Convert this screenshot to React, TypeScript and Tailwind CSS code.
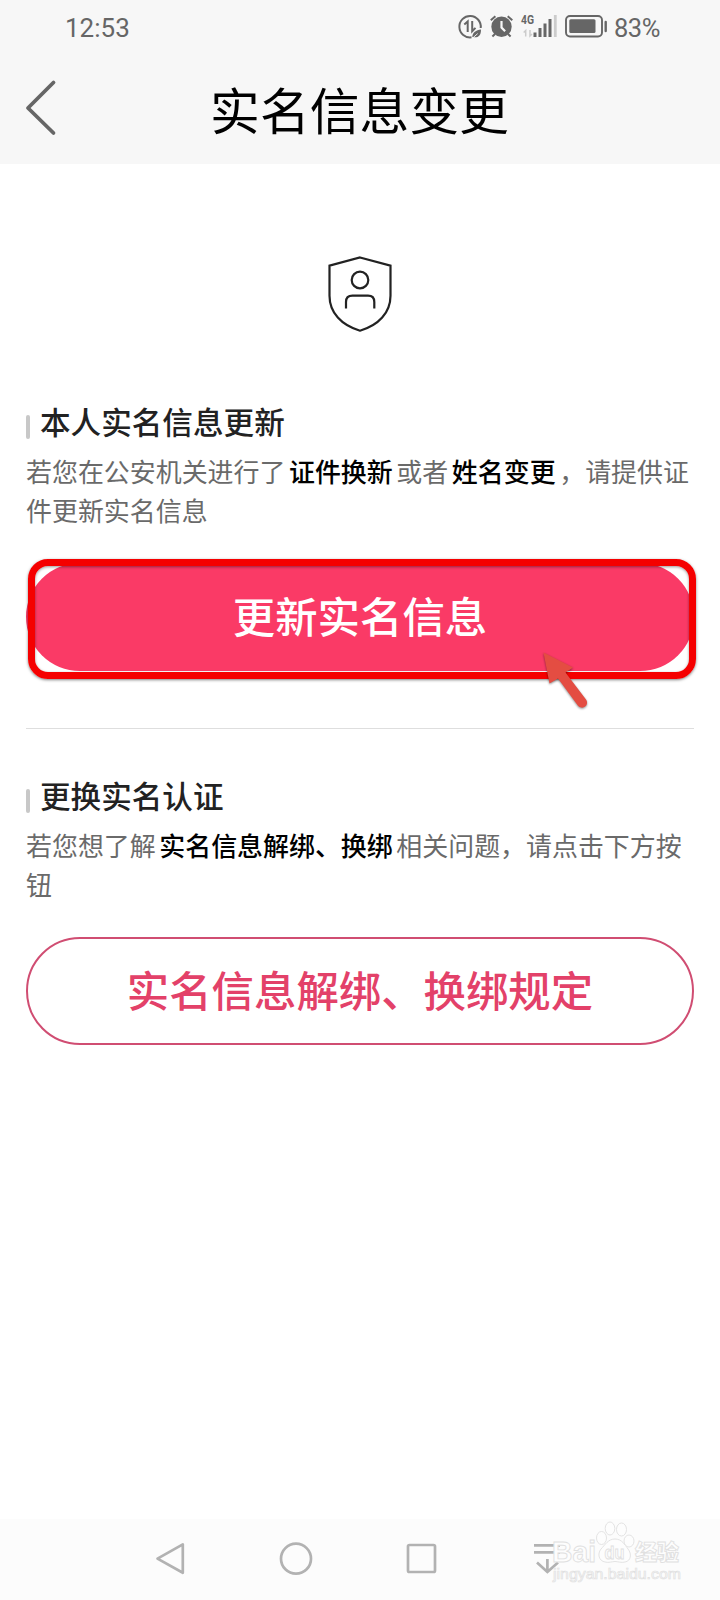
import type { ReactNode } from "react";

const StatusBar = () => {
  return (
    <div className="flex h-[54px] items-center justify-between pl-[65px] pr-[60px] font-[Roboto,sans-serif] text-[26px] leading-[54px] text-[#666]">
      <span className="pt-[2px]">12:53</span>
      <div className="flex items-center">
        <svg className="h-[54px] w-[157px]" viewBox="456 0 157 54" fill="none" stroke="#666">
          {/* data saver */}
          <path d="M471.5 37.3A10.7 10.7 0 1 1 480.7 28" strokeWidth="2" />
          <path d="M464.3 24.5l3.4-3v10.6M472.2 21v10.3l3.3-3.4" strokeWidth="2" />
          <path d="M481 29.5c0 6-2.5 8-6.3 7.8l-2.4-.2c.2-4.6 3.7-6.9 8.7-7.6z" fill="#666" stroke="none" />
          <path d="M472.5 38.2l5.2-4.6" stroke="#f7f7f7" strokeWidth="0.9" />
          {/* alarm */}
          <circle cx="501.5" cy="26.8" r="10.2" fill="#666" stroke="none" />
          <path d="M490.8 20.2l4.6-4M512.3 20.2l-4.6-4M495 34l-2.6 2.5M508 34l2.6 2.5" strokeWidth="2" />
          <path d="M501.5 21v6.5l3.6 3.8" stroke="#f7f7f7" strokeWidth="2.2" />
          {/* signal */}
          <path d="M523.7 32.5l2-2v6M530 30v6l2-2" stroke="#ccc" strokeWidth="1.5" />
          <path d="M535 32.5v4.5M540 28v9M545 23.5v13.5M550 19v18" strokeWidth="3" />
          <path d="M555.3 15v22" stroke="#ccc" strokeWidth="2.8" />
          <text x="521" y="24.3" textLength="13" lengthAdjust="spacingAndGlyphs" fontSize="13" fontWeight="700" fill="#666" stroke="none">4G</text>
          {/* battery */}
          <rect x="566" y="16" width="36" height="20.5" rx="4" strokeWidth="1.9" />
          <rect x="569.3" y="19.3" width="26.2" height="13.7" rx="1.5" fill="#666" stroke="none" />
          <path d="M605.7 22v9" strokeWidth="2.4" strokeLinecap="round" />
        </svg>
        <span className="w-[47px] pt-[2px] pl-px text-[25.5px] tracking-[-0.5px]">83%</span>
      </div>
    </div>
  );
};

const Section = ({ title, children }: { title: string; children: ReactNode }) => {
  return (
    <section>
      <div className="flex h-[44px] items-center gap-[10px]">
        <span className="mt-[12px] h-6 w-1 rounded-sm bg-[#c8c8c8]" />
        <h2 className="text-[30.6px] leading-[44px] font-medium text-[#222]">{title}</h2>
      </div>
      <p className="mt-[8px] -mr-4 text-[25.95px] leading-[39px] text-[#6a6a6a]">{children}</p>
    </section>
  );
};

const Strong = ({ children }: { children: ReactNode }) => (
  <span className="mx-[3.6px] font-medium text-black">{children}</span>
);

const Watermark = () => {
  return (
    <svg className="absolute top-0 left-[540px] h-[81px] w-[180px]" viewBox="540 1519 180 81" fill="#fdfdfd" stroke="#e0e0e0" strokeWidth="0.9">
      <g fontFamily="Liberation Sans, sans-serif" fontWeight="700">
        <text x="552" y="1561.5" fontSize="29" textLength="44" lengthAdjust="spacingAndGlyphs">Bai</text>
        <path d="M615 1539c7 0 10 6 13 10 4 5 3 12-3 13-4 1-7-.5-10-.5s-6 1.5-10 .5c-6-1-8-8-4-13 4-4 7-10 14-10z" />
        <ellipse cx="601.5" cy="1538" rx="5" ry="6.5" />
        <ellipse cx="610" cy="1528.5" rx="4.8" ry="6.5" />
        <ellipse cx="621.5" cy="1529.5" rx="5" ry="6.5" />
        <ellipse cx="629" cy="1541" rx="5" ry="6" />
        <text x="604.5" y="1559" fontSize="19" textLength="20" lengthAdjust="spacingAndGlyphs">du</text>
      </g>
      <text x="635" y="1560" fontSize="22" fontWeight="900" textLength="44" lengthAdjust="spacingAndGlyphs" fontFamily="Noto Sans CJK SC, sans-serif">经验</text>
      <text x="553" y="1579" fontSize="15.5" strokeWidth="0.7" textLength="128" lengthAdjust="spacingAndGlyphs" fontFamily="Liberation Sans, sans-serif">jingyan.baidu.com</text>
    </svg>
  );
};

const NavBar = () => {
  return (
    <nav className="relative flex h-[81px] items-center bg-[#fcfcfc] pl-[154px]">
      <div className="flex items-center gap-[85px]">
        <svg className="size-10" viewBox="0 0 40 40" fill="none" stroke="#b2b2b2" strokeWidth="2.7" strokeLinejoin="round">
          <path d="M28.8 4.4v28.4L3.5 18.6z" />
        </svg>
        <svg className="size-10" viewBox="0 0 40 40" fill="none" stroke="#b2b2b2" strokeWidth="2.7">
          <circle cx="17" cy="18.7" r="15" />
        </svg>
        <svg className="size-10" viewBox="0 0 40 40" fill="none" stroke="#b2b2b2" strokeWidth="2.7">
          <rect x="4" y="5" width="27" height="27" rx="1.5" />
        </svg>
        <svg className="size-10" viewBox="0 0 40 40" fill="none" stroke="#b2b2b2" strokeWidth="2.7">
          <path d="M5 5.3h26M5 12.3h26M18.4 19v13M8 22.5l10.4 9.5L29 22.5" />
        </svg>
      </div>
      <Watermark />
    </nav>
  );
};

export default function App() {
  return (
    <div className="flex h-[1600px] w-[720px] flex-col overflow-hidden bg-white font-['Noto_Sans_CJK_SC',sans-serif]">
      <header className="h-[164px] bg-[#f7f7f7]">
        <StatusBar />
        <div className="flex h-[108px] items-center">
          <svg className="ml-6 h-[60px] w-9" viewBox="0 0 36 60" fill="none" stroke="#666" strokeWidth="3.8" strokeLinecap="round" strokeLinejoin="round">
            <path d="M29.5 4.5L4 30l25.500 25" />
          </svg>
          <h1 className="flex-1 pr-[61px] text-center text-[49.8px] leading-[72px] text-black">实名信息变更</h1>
        </div>
      </header>

      <main className="flex-1 px-[26px] pt-[90px]">
        <svg className="mx-auto h-[80px] w-[72px]" viewBox="324 254 72 80" fill="none" stroke="#222" strokeWidth="2.2">
          <path d="M360 257.5l30.5 8.2v30c0 17-12 29.5-30.5 35-18.5-5.5-30.5-18-30.5-35v-30z" />
          <circle cx="360" cy="280" r="8.3" />
          <path d="M346 308.5v-6.5q0-6.3 6.500-6.300h15.500q6.300 0 6.300 6.300v6.500" />
        </svg>

        <div className="mt-[65px]">
          <Section title="本人实名信息更新">
            若您在公安机关进行了<Strong>证件换新</Strong>或者<Strong>姓名变更</Strong>，请提供证<br />件更新实名信息
          </Section>
        </div>
        <div className="relative mt-[34px]">
          <button className="block h-[108px] w-full rounded-full bg-[#fa3a66] pb-[4px] text-[42.4px] leading-[100px] font-medium text-white">
            更新实名信息
          </button>
          <div className="absolute -top-1 left-[2px] h-[120px] w-[668px] rounded-[20px] border-[7px] border-[#f50000] shadow-[0_1px_3px_rgba(0,0,0,0.5),inset_0_1px_3px_rgba(0,0,0,0.4)]" />
          <svg className="absolute top-[86px] left-[512px] h-[66px] w-[60px] drop-shadow-[0_1px_1px_rgba(0,0,0,0.45)]" viewBox="538 649 60 66" fill="#e44d42">
            <path d="M543.5 652.5L573 667.5 565.5 672.5 586 699.5a5 5 0 0 1-8 6.2L558 678.5 549.5 683.5z" />
          </svg>
        </div>

        <div className="mt-[57px] h-px bg-[#dedede]" />

        <div className="mt-[44px]">
          <Section title="更换实名认证">
            若您想了解<Strong>实名信息解绑、换绑</Strong>相关问题，请点击下方按<br />钮
          </Section>
        </div>
        <button className="mt-[34px] block h-[108px] w-full rounded-full border-2 border-[#d04d72] pb-[4px] text-[42.4px] leading-[100px] font-medium text-[#e34169]">
          实名信息解绑、换绑规定
        </button>
      </main>

      <NavBar />
    </div>
  );
}
